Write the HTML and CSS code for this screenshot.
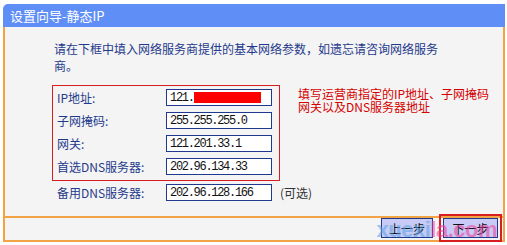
FILE: index.html
```html
<!DOCTYPE html>
<html lang="zh-CN">
<head>
  <meta charset="UTF-8" />
  <title>设置向导-静态IP</title>
  <link rel="stylesheet" href="styles.css">
</head>
<body>
  <div class="panel">
    <div class="panel-title">设置向导-静态IP</div>

    <div class="panel-body">
      <p class="intro">请在下框中填入网络服务商提供的基本网络参数，如遗忘请咨询网络服务商。</p>

      <div class="fields">
        <div class="required">
          <div class="row">
            <label>IP地址:</label>
            <div class="input"><span>121.</span><span class="masked"></span></div>
          </div>
          <div class="row">
            <label>子网掩码:</label>
            <div class="input">255.255.255.0</div>
          </div>
          <div class="row">
            <label>网关:</label>
            <div class="input">121.201.33.1</div>
          </div>
          <div class="row">
            <label>首选DNS服务器:</label>
            <div class="input">202.96.134.33</div>
          </div>
        </div>
        <p class="note">填写运营商指定的IP地址、子网掩码<br>网关以及DNS服务器地址</p>
      </div>

      <div class="row row-extra">
        <label>备用DNS服务器:</label>
        <div class="input">202.96.128.166</div>
        <span class="optional">(可选)</span>
      </div>
    </div>

    <div class="panel-footer">
      <button class="btn">上一步</button>
      <button class="btn btn-next">下一步</button>
      <span class="watermark"><b class="wm-blue">xuexi</b><b class="wm-pink">la.com</b></span>
    </div>
  </div>
</body>
</html>
```

FILE: styles.css
```css
:root {
  --title-blue: #5f8ff6;
  --frame: #f2a444;
  --panel-bg: #f4f4f4;
  --navy: #1f3a8c;
  --red: #d81e1e;
}

* {
  margin: 0;
  padding: 0;
  box-sizing: border-box;
}

body {
  background: #fff;
  font-family: "Noto Sans CJK SC", "Liberation Sans", sans-serif;
  font-size: 12px;
  color: var(--navy);
}

.panel {
  width: 502px;
  margin: 4px 0 0 3px;
}

.panel-title {
  height: 23px;
  line-height: 23px;
  padding-left: 7px;
  background: var(--title-blue);
  color: #fff;
  font-size: 13px;
  border-top-left-radius: 5px;
}

.panel-body {
  background: var(--panel-bg);
  border-left: 2px solid var(--frame);
  border-right: 2px solid var(--frame);
  padding: 13px 0 12px;
}

.intro {
  width: 386px;
  margin-left: 49px;
  line-height: 17px;
}

.fields {
  display: flex;
  align-items: flex-start;
  margin-top: 11px;
}

.required {
  margin-left: 47px;
  width: 228px;
  border: 1px solid var(--red);
  padding: 0 4px 2px;
}

.row {
  display: flex;
  align-items: center;
  height: 23px;
}

.row label {
  width: 109px;
}

.row-extra {
  padding-left: 52px;
}

.input {
  display: flex;
  align-items: center;
  width: 106px;
  height: 17px;
  padding-left: 3px;
  background: #fff;
  border: 1px solid var(--navy);
  font-family: "Liberation Mono", monospace;
  font-size: 12px;
  letter-spacing: -1.3px;
  color: #111;
}

.masked {
  width: 67px;
  height: 11px;
  background: #ff0000;
}

.optional {
  margin-left: 8px;
  color: #333;
}

.note {
  margin: 2px 0 0 18px;
  color: #d40000;
  font-size: 12px;
  line-height: 13px;
}

.panel-footer {
  position: relative;
  display: flex;
  justify-content: flex-end;
  gap: 10px;
  height: 26px;
  padding: 0 5px 0 0;
  background: var(--panel-bg);
  border: 2px solid var(--frame);
}

.btn {
  width: 52px;
  height: 20px;
  background: #c8cbf5;
  border: 1px solid var(--navy);
  color: #111;
  font-family: "Noto Sans CJK SC", sans-serif;
  font-size: 12px;
}

.btn-next {
  width: 55px;
  outline: 2px solid var(--red);
  outline-offset: 2px;
}

.watermark {
  position: absolute;
  right: 6px;
  top: -1px;
  font-family: "Liberation Sans", sans-serif;
  font-size: 22px;
  letter-spacing: -0.5px;
  opacity: 0.55;
  pointer-events: none;
}

.wm-blue {
  color: #5aa0e6;
}

.wm-pink {
  color: #ee3a9a;
}
```
